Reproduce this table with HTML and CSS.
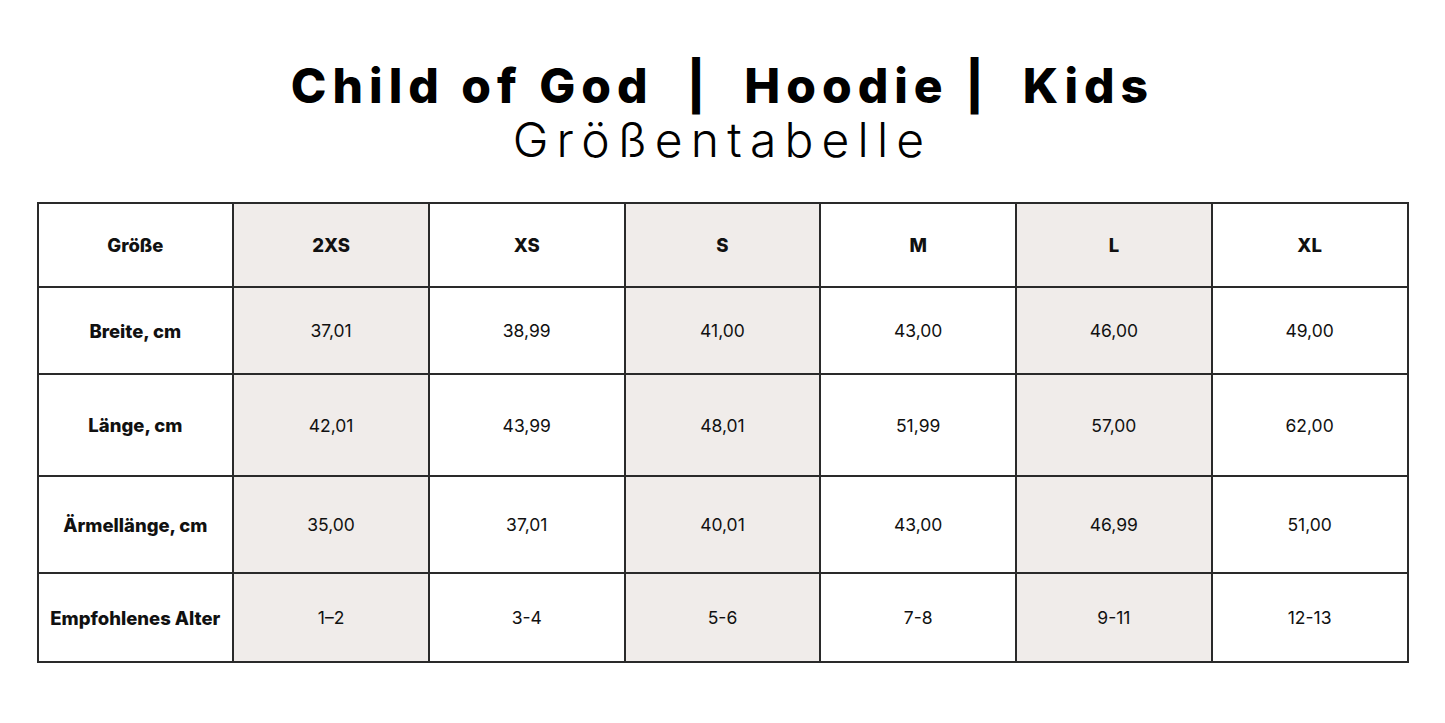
FILE: index.html
```html
<!DOCTYPE html>
<html lang="de">
<head>
<meta charset="utf-8">
<link rel="stylesheet" href="styles.css">
</head>
<body>
<header class="head">
  <h1 class="title">Child of God&nbsp; |&nbsp; Hoodie |&nbsp; Kids</h1>
  <p class="subtitle">Größentabelle</p>
</header>
<table class="chart">
  <tr class="r1">
    <th>Größe</th><th class="s">2XS</th><th>XS</th><th class="s">S</th><th>M</th><th class="s">L</th><th>XL</th>
  </tr>
  <tr class="r2">
    <th>Breite, cm</th><td class="s">37,01</td><td>38,99</td><td class="s">41,00</td><td>43,00</td><td class="s">46,00</td><td>49,00</td>
  </tr>
  <tr class="r3">
    <th>Länge, cm</th><td class="s">42,01</td><td>43,99</td><td class="s">48,01</td><td>51,99</td><td class="s">57,00</td><td>62,00</td>
  </tr>
  <tr class="r4">
    <th>Ärmellänge, cm</th><td class="s">35,00</td><td>37,01</td><td class="s">40,01</td><td>43,00</td><td class="s">46,99</td><td>51,00</td>
  </tr>
  <tr class="r5">
    <th>Empfohlenes Alter</th><td class="s">1–2</td><td>3-4</td><td class="s">5-6</td><td>7-8</td><td class="s">9-11</td><td>12-13</td>
  </tr>
</table>
</body>
</html>
```
FILE: styles.css
```css
html, body {
  margin: 0;
  padding: 0;
  background: #ffffff;
}
body {
  font-family: "Inter", "Noto Sans", "Liberation Sans", sans-serif;
  color: #111111;
  width: 1445px;
  height: 723px;
  overflow: hidden;
}
.head {
  text-align: center;
  padding-top: 58px;
}
.title {
  margin: 0;
  font-size: 48px;
  line-height: 56px;
  font-weight: 800;
  letter-spacing: 0.125em;
  color: #000;
}
.subtitle {
  margin: 0;
  font-size: 48px;
  line-height: 52px;
  font-weight: 300;
  letter-spacing: 0.17em;
  color: #000;
}
.chart {
  margin: 36px auto 0;
  border-collapse: collapse;
  table-layout: fixed;
  width: 1372px;
}
.chart th, .chart td {
  border: 2px solid #2a2a2a;
  text-align: center;
  vertical-align: middle;
  padding: 0;
  font-size: 17.5px;
  color: #111;
}
.chart th {
  font-weight: 800;
  font-size: 18.5px;
}
.chart td {
  font-weight: 400;
}
.chart .s {
  background: #f0ecea;
}
.r1 { height: 84px; }
.r2 { height: 87px; }
.r3 { height: 102px; }
.r4 { height: 97px; }
.r5 { height: 89px; }
```
